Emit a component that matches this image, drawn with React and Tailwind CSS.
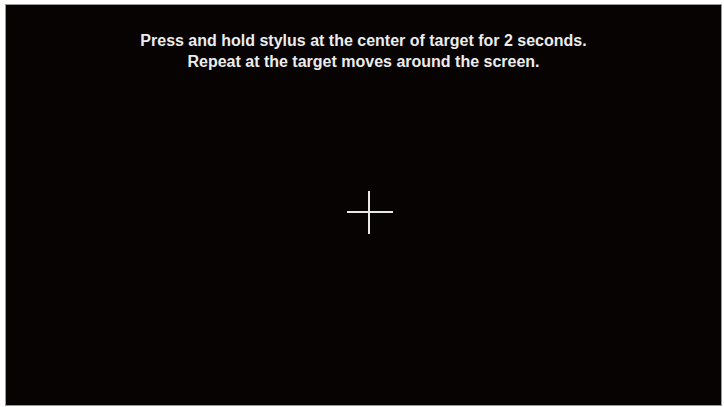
export default function App() {
  return (
    <div className="w-[724px] h-[407px] bg-white pl-[5px] pt-[4px]">
      <div className="w-[717px] h-[402px] border border-[#9a9a9a] bg-[#070303] flex flex-col items-center">
        <div
          className="mt-[25px] text-center text-[#ececec] font-bold text-[16px] leading-[21px]"
          style={{ fontFamily: '"Liberation Sans", Arial, sans-serif' }}
        >
          <p>Press and hold stylus at the center of target for 2 seconds.</p>
          <p>Repeat at the target moves around the screen.</p>
        </div>
        <div className="relative mt-[119px] ml-[12px] w-[46px] h-[43px]">
          <div className="absolute left-[21px] top-0 w-[2px] h-[43px] bg-[#e8e8e8]" />
          <div className="absolute left-0 top-[20px] w-[46px] h-[2px] bg-[#e8e8e8]" />
        </div>
      </div>
    </div>
  );
}
